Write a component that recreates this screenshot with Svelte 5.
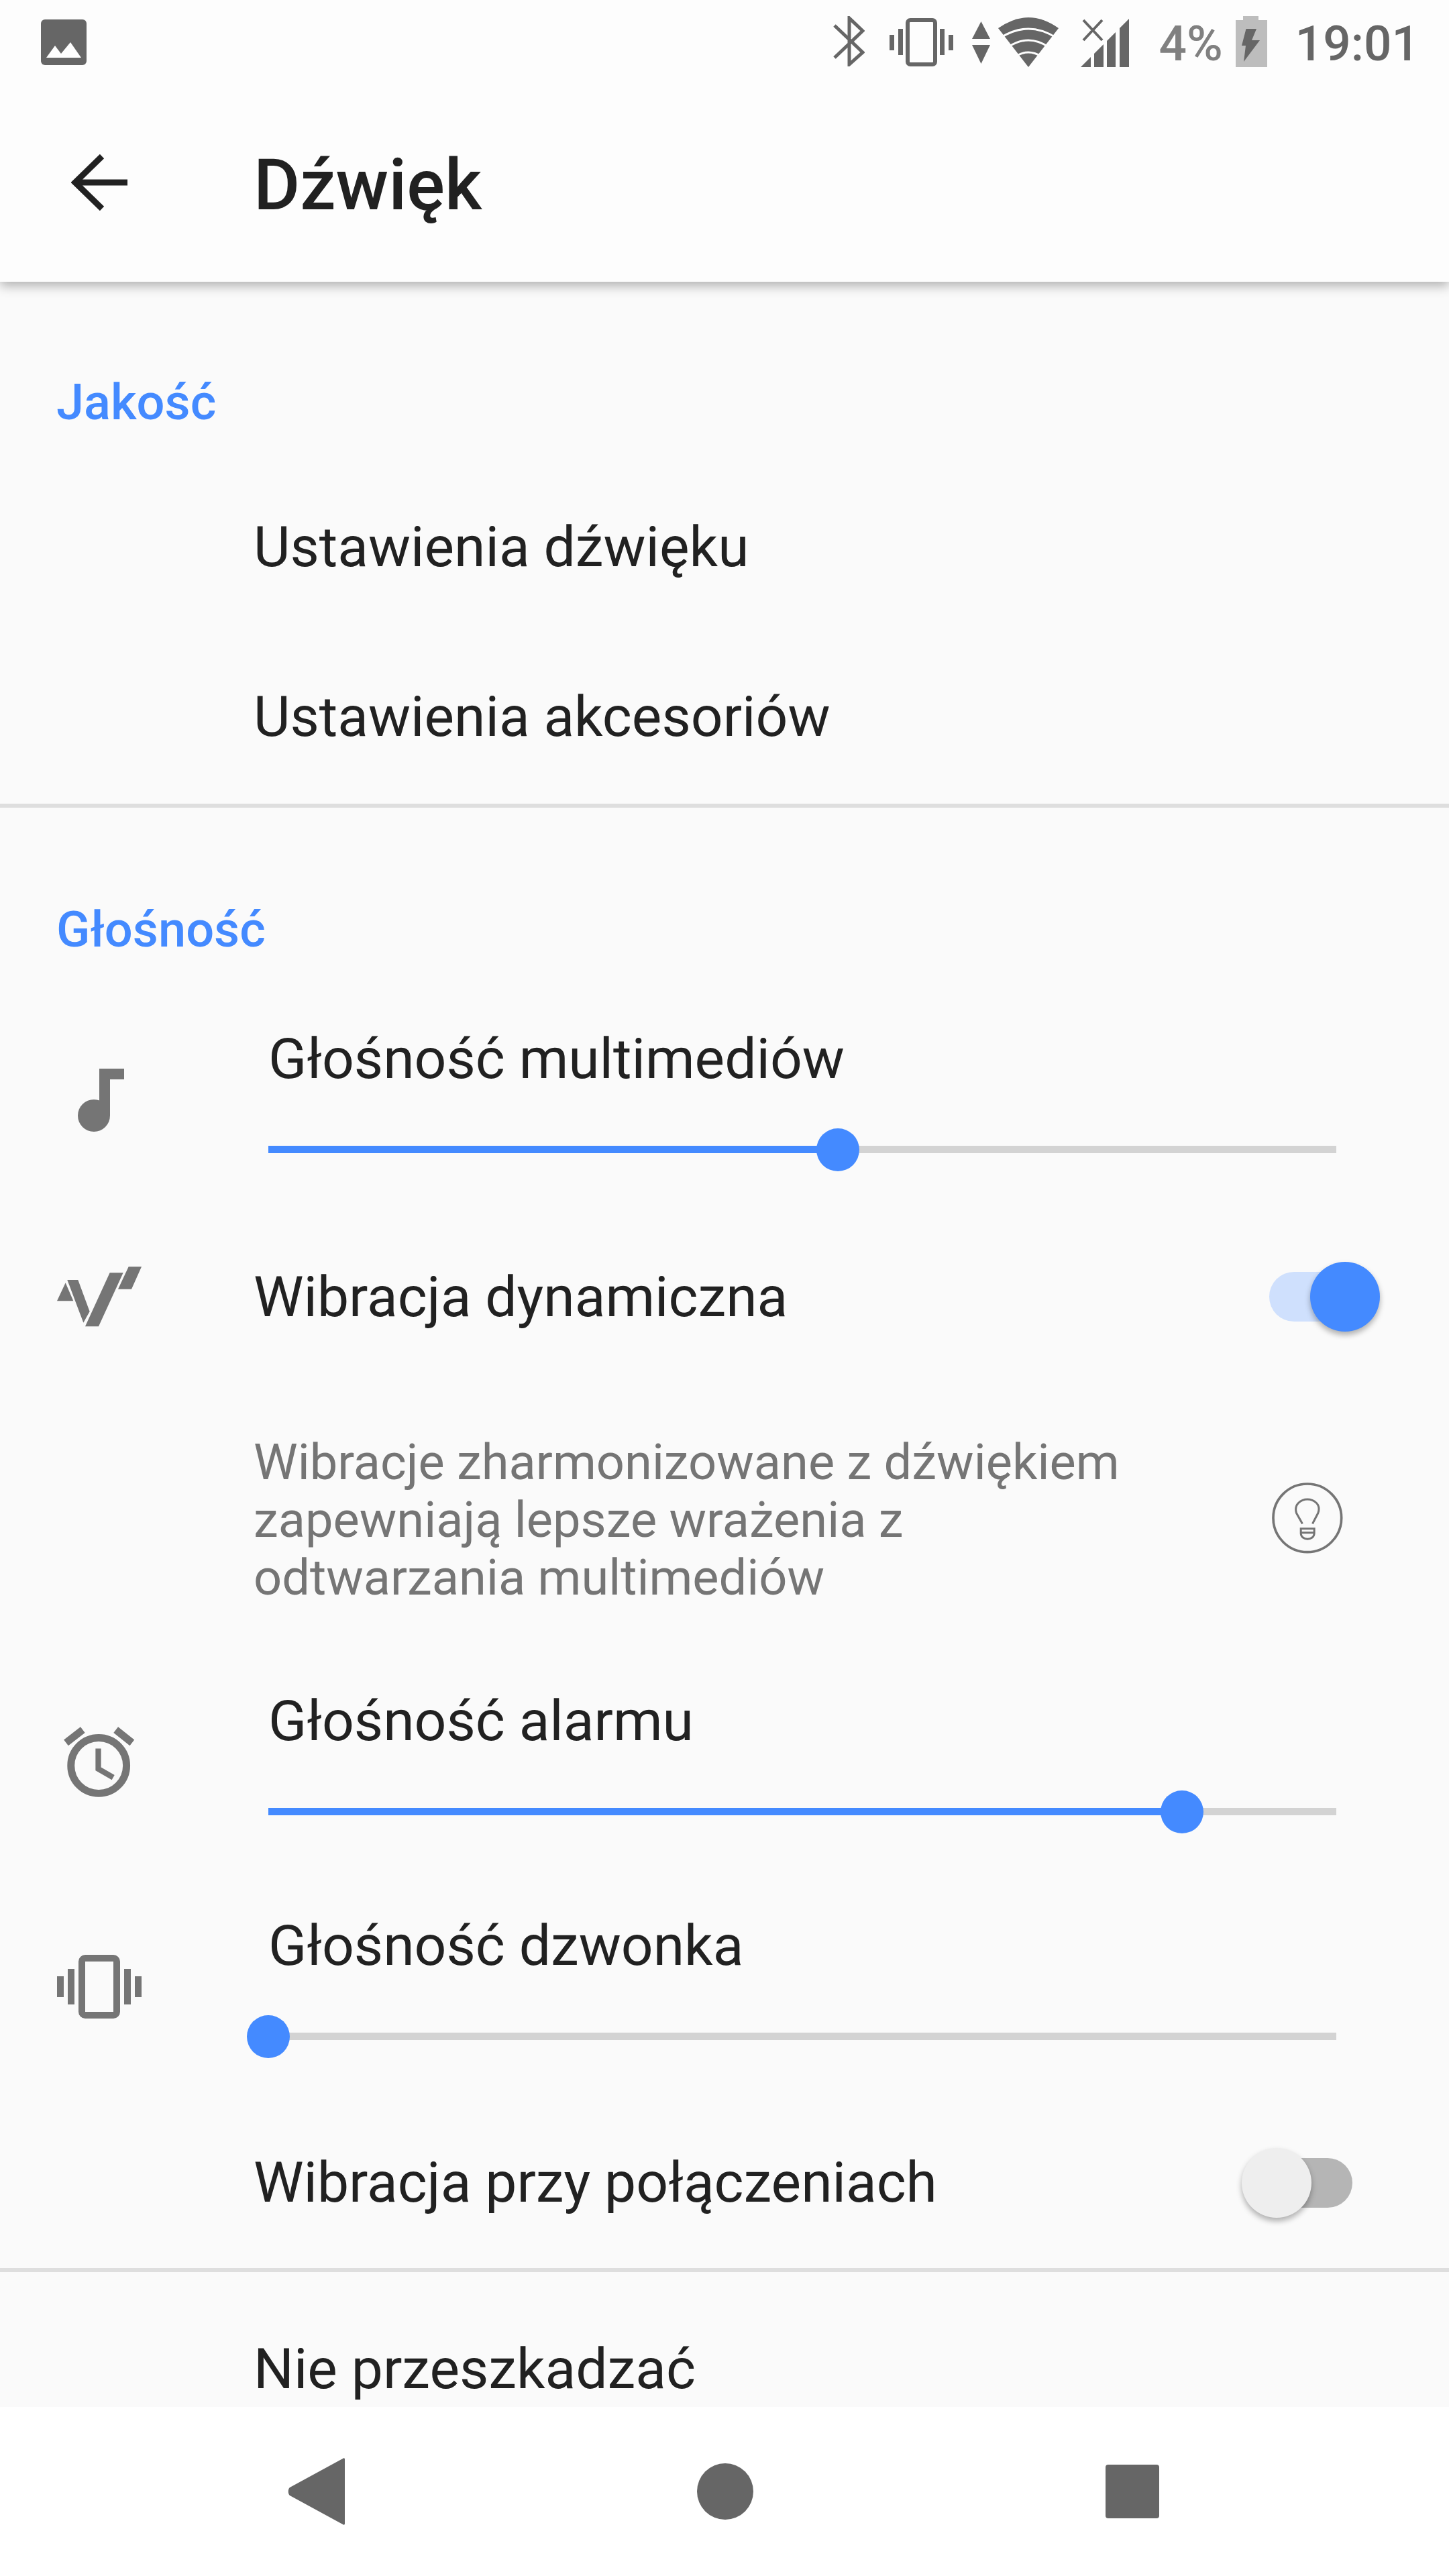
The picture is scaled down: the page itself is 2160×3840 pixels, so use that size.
<script>
	const sliders = {
		media: { label: 'Głośność multimediów', thumb: 849 },
		alarm: { label: 'Głośność alarmu', thumb: 1362 },
		ring: { label: 'Głośność dzwonka', thumb: 0 }
	};
</script>

{#snippet slider(s)}
	<div class="slider-body">
		<div class="slider-label">{s.label}</div>
		<div class="track">
			<div class="track-fill" style="width: {s.thumb}px"></div>
			<div class="thumb" style="left: {s.thumb - 32}px"></div>
		</div>
	</div>
{/snippet}

<div class="screen">
	<header class="top">
		<div class="status">
			<svg class="s-image" width="68" height="68" viewBox="0 0 68 68">
				<rect width="68" height="68" rx="6" fill="#666" />
				<path d="M8 57 21 39 30 51 44 34 60 57Z" fill="#fdfdfd" />
			</svg>
			<div class="status-right">
				<svg width="47" height="75" viewBox="0 0 47 75">
					<path d="M2 14 44 54 24 72V3L44 22 2 62" fill="none" stroke="#666" stroke-width="5" />
				</svg>
				<svg class="s-vib" width="95" height="72" viewBox="0 0 95 72" fill="#666">
					<rect x="27" y="3" width="41" height="66" rx="4" fill="none" stroke="#666" stroke-width="6" />
					<rect x="13" y="16" width="7" height="39" />
					<rect y="25" width="7" height="23" />
					<rect x="75" y="16" width="7" height="39" />
					<rect x="88" y="25" width="7" height="23" />
				</svg>
				<svg class="s-arrows" width="27" height="63" viewBox="0 0 27 63" fill="#666">
					<path d="M13.5 0 27 26H0Z" />
					<path d="M0 35H27L13.5 63Z" />
				</svg>
				<svg class="s-wifi" width="90" height="74" viewBox="0 0 90 74">
					<path d="M45 74 0 16Q45-16 90 16Z" fill="#666" />
					<path d="M4 30Q45 4 86 30M15 44Q45 24 75 44M26 58Q45 46 64 58" fill="none" stroke="#fdfdfd" stroke-width="3" />
				</svg>
				<svg class="s-signal" width="72" height="72" viewBox="0 0 72 72" fill="#666">
					<path d="M0 72 15 57V72Z" />
					<path d="M20 52 34 38V72H20Z" />
					<path d="M39 33 52 20V72H39Z" />
					<path d="M58 14 72 0V72H58Z" />
					<path d="M4 2 32 32M32 2 4 32" fill="none" stroke="#666" stroke-width="4" />
				</svg>
				<span class="pct">4%</span>
				<svg class="s-batt" width="47" height="76" viewBox="0 0 47 76">
					<path d="M11 0H34V6H47V76H0V6H11Z" fill="#bdbdbd" />
					<path d="M15.5 19H31L24 36H36L12 68 15 44H9Z" fill="#666" />
				</svg>
				<span class="clock">19:01</span>
			</div>
		</div>
		<div class="appbar">
			<svg class="back" width="84" height="84" viewBox="0 0 84 84">
				<path d="M84 42H7M46 3 6 42 46 81" fill="none" stroke="#212121" stroke-width="9" />
			</svg>
			<h1>Dźwięk</h1>
		</div>
	</header>

	<main>
		<section class="quality">
			<h2>Jakość</h2>
			<div class="row plain">Ustawienia dźwięku</div>
			<div class="row plain">Ustawienia akcesoriów</div>
		</section>

		<section class="volume">
			<h2>Głośność</h2>

			<div class="row slider-row">
				<div class="icon">
					<svg class="music" width="69" height="94" viewBox="0 0 69 94" fill="#757575">
						<circle cx="24" cy="70" r="24" />
						<path d="M32 0H69V16H48V70H32Z" />
					</svg>
				</div>
				{@render slider(sliders.media)}
			</div>

			<div class="row dynamic">
				<div class="icon">
					<svg width="126" height="90" viewBox="132 1165 378 268" fill="#757575">
						<path d="M132 1318 170 1237 205 1318Z" />
						<path d="M178 1224H226L278 1365 250 1415Z" />
						<path d="M368 1192H428L318 1432H258Z" />
						<path d="M452 1165H510L465 1265H405Z" />
					</svg>
				</div>
				<div class="row-text">Wibracja dynamiczna</div>
				<div class="switch on"><span class="knob"></span></div>
			</div>

			<div class="row description">
				<p>Wibracje zharmonizowane z dźwiękiem zapewniają lepsze wrażenia z odtwarzania multimediów</p>
				<svg class="bulb" width="108" height="108" viewBox="285 1070 325 325" fill="none" stroke="#757575">
					<circle cx="447" cy="1232" r="153" stroke-width="11" />
					<path d="M425 1258 398 1210C385 1170 420 1148 447 1148 475 1148 510 1170 495 1210L470 1258M418 1280H478V1300C478 1335 418 1335 418 1300ZM418 1298H478" stroke-width="9" />
				</svg>
			</div>

			<div class="row slider-row">
				<div class="icon">
					<svg width="106" height="106" viewBox="165 160 315 320" fill="none" stroke="#757575">
						<circle cx="320" cy="335" r="125" stroke-width="33" />
						<path d="M173 232 248 174M397 174 470 232" stroke-width="33" />
						<path d="M318 258V350L385 388" stroke-width="25" />
					</svg>
				</div>
				{@render slider(sliders.alarm)}
			</div>

			<div class="row slider-row">
				<div class="icon">
					<svg width="126" height="95" viewBox="0 0 126 95" fill="#757575">
						<rect x="37" y="5" width="52" height="85" rx="5" fill="none" stroke="#757575" stroke-width="10" />
						<rect x="16" y="21" width="10" height="53" />
						<rect y="32" width="10" height="31" />
						<rect x="100" y="21" width="10" height="53" />
						<rect x="116" y="32" width="10" height="31" />
					</svg>
				</div>
				{@render slider(sliders.ring)}
			</div>

			<div class="row plain-switch">
				<div class="icon"></div>
				<div class="row-text">Wibracja przy połączeniach</div>
				<div class="switch off"><span class="knob"></span></div>
			</div>
		</section>

		<div class="row last">Nie przeszkadzać</div>
	</main>

	<nav>
		<svg width="85" height="100" viewBox="0 0 85 100" fill="#666">
			<path d="M85 2V98C85 100 83 100 82 99L3 56C0 54 0 46 3 44L82 1C83 0 85 0 85 2Z" />
		</svg>
		<span class="home"></span>
		<span class="recent"></span>
	</nav>
</div>

<style>
	:global(body) {
		margin: 0;
	}

	.screen {
		width: 2160px;
		height: 3840px;
		display: flex;
		flex-direction: column;
		background: #fafafa;
		font-family: Roboto, sans-serif;
		color: #212121;
		overflow: hidden;
	}

	.top {
		height: 420px;
		flex-shrink: 0;
		background: #fdfdfd;
		box-shadow: 0 6px 16px rgba(0, 0, 0, 0.3);
		position: relative;
	}

	.status {
		height: 130px;
		display: flex;
		justify-content: space-between;
		padding: 24px 44px 0 61px;
		box-sizing: border-box;
	}

	.s-image {
		margin-top: 5px;
	}

	.status-right {
		display: flex;
		height: 76px;
		color: #666;
	}

	.s-vib {
		margin: 3px 0 0 37px;
	}

	.s-arrows {
		margin: 8px 0 0 28px;
	}

	.s-wifi {
		margin: 2px 0 0 12px;
	}

	.s-signal {
		margin: 4px 0 0 33px;
	}

	.pct {
		font-size: 73px;
		font-weight: 500;
		line-height: 76px;
		margin: 3px 0 0 45px;
		color: #808080;
	}

	.s-batt {
		margin-left: 19px;
	}

	.clock {
		font-size: 73px;
		font-weight: 500;
		line-height: 76px;
		margin: 3px 0 0 42px;
	}

	.appbar {
		height: 290px;
		display: flex;
		align-items: center;
		padding-left: 106px;
	}

	.back {
		margin-right: 188px;
		margin-top: -7px;
	}

	h1 {
		margin: 2px 0 0;
		font-size: 106px;
		font-weight: 500;
		letter-spacing: 0;
	}

	main {
		flex: 1;
		min-height: 0;
		overflow: hidden;
	}

	h2 {
		margin: 0;
		height: 120px;
		line-height: 120px;
		padding-left: 84px;
		font-size: 74px;
		font-weight: 500;
		color: #448aff;
	}

	section {
		border-bottom: 6px solid #dedede;
	}

	.quality {
		padding-top: 120px;
		height: 784px;
		box-sizing: border-box;
	}

	.quality h2 {
		margin-bottom: 29px;
	}

	.volume {
		padding-top: 122px;
		height: 2183px;
		box-sizing: border-box;
	}

	.row {
		font-size: 84px;
	}

	.plain {
		height: 253px;
		line-height: 253px;
		padding-left: 378px;
	}

	.slider-row {
		height: 335px;
		display: flex;
	}

	.icon {
		width: 296px;
		flex-shrink: 0;
		display: flex;
		justify-content: center;
		align-items: center;
		margin-right: 82px;
	}

	.music {
		margin-left: 4px;
	}

	.slider-row .icon {
		padding-top: 52px;
		box-sizing: border-box;
		margin-right: 104px;
	}

	.slider-body {
		width: 1592px;
		padding-top: 83px;
	}

	.slider-label {
		height: 100px;
		line-height: 100px;
	}

	.track {
		position: relative;
		height: 11px;
		margin-top: 79px;
		background: #d3d3d3;
	}

	.track-fill {
		height: 100%;
		background: #448aff;
	}

	.thumb {
		position: absolute;
		top: -26px;
		width: 64px;
		height: 64px;
		border-radius: 50%;
		background: #448aff;
	}

	.dynamic {
		height: 304px;
		display: flex;
		align-items: center;
	}

	.row-text {
		flex: 1;
	}

	.switch {
		position: relative;
		width: 124px;
		height: 74px;
		border-radius: 37px;
		margin-right: 144px;
	}

	.switch.on {
		background: #cfe0fd;
	}

	.switch.off {
		background: #b5b5b5;
	}

	.knob {
		position: absolute;
		top: -15px;
		width: 104px;
		height: 104px;
		border-radius: 50%;
		box-shadow: 0 5px 9px rgba(0, 0, 0, 0.3);
	}

	.on .knob {
		right: -41px;
		background: #448aff;
	}

	.off .knob {
		left: -41px;
		background: #eeeeee;
	}

	.description {
		height: 348px;
		display: flex;
		align-items: center;
		padding: 8px 157px 0 378px;
		box-sizing: border-box;
	}

	.description p {
		margin: 5px 0 0;
		flex: 1;
		max-width: 1320px;
		margin-right: auto;
		font-size: 74px;
		line-height: 86px;
		color: #757575;
	}

	.bulb {
		margin-left: auto;
		flex-shrink: 0;
	}

	.plain-switch {
		height: 283px;
		padding-top: 18px;
		box-sizing: border-box;
		display: flex;
		align-items: center;
	}

	.last {
		height: 290px;
		line-height: 290px;
		padding-left: 378px;
	}

	nav {
		height: 252px;
		flex-shrink: 0;
		background: #fff;
		display: flex;
		align-items: center;
		padding-left: 429px;
	}

	.home {
		width: 84px;
		height: 84px;
		border-radius: 50%;
		background: #666;
		margin-left: 525px;
	}

	.recent {
		width: 80px;
		height: 80px;
		border-radius: 4px;
		background: #666;
		margin-left: 525px;
	}
</style>
